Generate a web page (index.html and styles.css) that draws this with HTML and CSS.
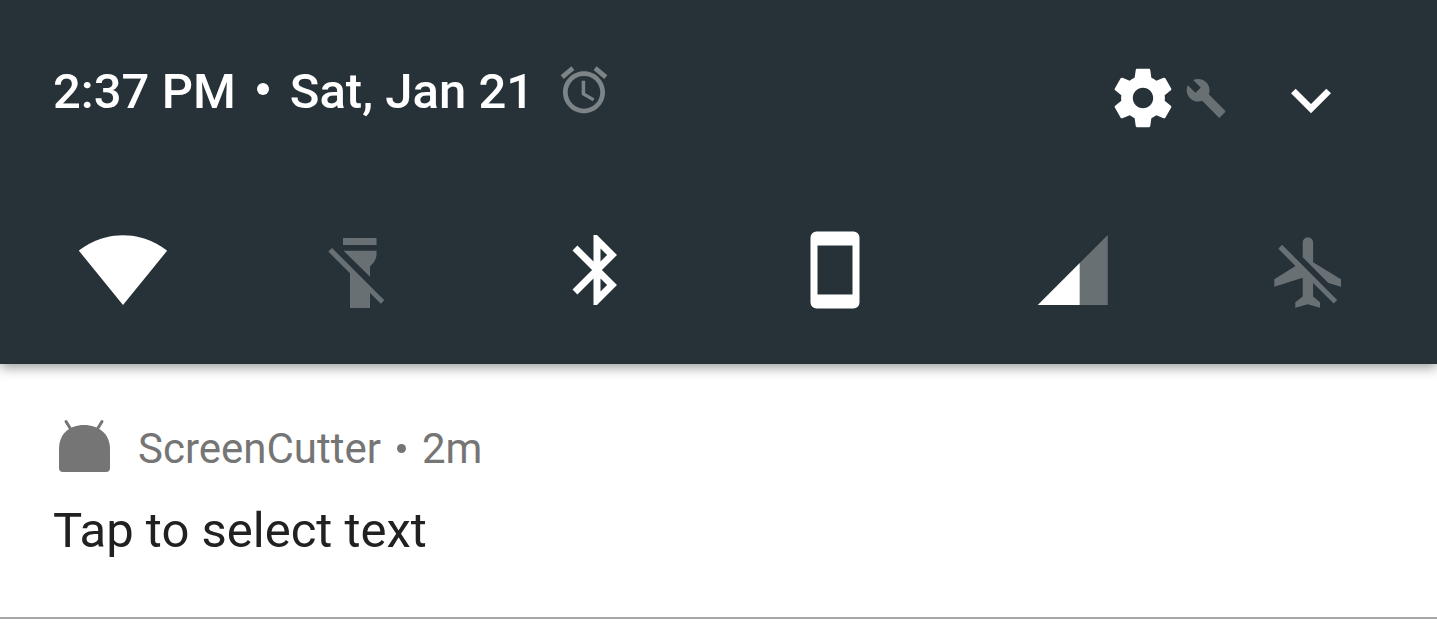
FILE: index.html
```html
<!DOCTYPE html>
<html lang="en">
<head>
<meta charset="utf-8">
<meta name="viewport" content="width=device-width, initial-scale=1">
<title>Notifications</title>
<link rel="stylesheet" href="styles.css">
</head>
<body>
<header class="quick-settings">
  <div class="status">
    <div class="clock">
      <span>2:37 PM</span><span class="dot"></span><span>Sat, Jan 21</span>
      <svg class="alarm" viewBox="0 0 24 24" role="img" aria-label="Alarm set"><path d="M22 5.72l-4.6-3.86-1.29 1.53 4.6 3.86L22 5.72zM7.88 3.39L6.6 1.86 2 5.71l1.29 1.53 4.59-3.85zM12.5 8H11v6l4.75 2.85.75-1.23-4-2.37V8zM12 4c-4.97 0-9 4.03-9 9s4.02 9 9 9c4.97 0 9-4.03 9-9s-4.03-9-9-9zm0 16c-3.87 0-7-3.13-7-7s3.13-7 7-7 7 3.13 7 7-3.13 7-7 7z"/></svg>
    </div>
    <div class="actions">
      <button class="icon-button" aria-label="Settings">
        <svg class="gear" viewBox="0 0 24 24"><path d="M19.43 12.98c.04-.32.07-.64.07-.98s-.03-.66-.07-.98l2.11-1.65c.19-.15.24-.42.12-.64l-2-3.46c-.12-.22-.39-.3-.61-.22l-2.49 1c-.52-.4-1.08-.73-1.69-.98l-.38-2.65C14.46 2.18 14.25 2 14 2h-4c-.25 0-.46.18-.49.42l-.38 2.65c-.61.25-1.17.59-1.69.98l-2.49-1c-.23-.09-.49 0-.61.22l-2 3.46c-.13.22-.07.49.12.64l2.11 1.65c-.04.32-.07.65-.07.98s.03.66.07.98l-2.11 1.65c-.19.15-.24.42-.12.64l2 3.46c.12.22.39.3.61.22l2.49-1c.52.4 1.08.73 1.69.98l.38 2.65c.03.24.24.42.49.42h4c.25 0 .46-.18.49-.42l.38-2.65c.61-.25 1.17-.59 1.69-.98l2.49 1c.23.09.49 0 .61-.22l2-3.46c.12-.22.07-.49-.12-.64l-2.11-1.65zM12 15.5c-1.93 0-3.5-1.57-3.5-3.5s1.57-3.5 3.5-3.5 3.5 1.57 3.5 3.5-1.57 3.5-3.5 3.5z"/></svg>
        <svg class="wrench off" viewBox="0 0 24 24"><path d="M22.7 19l-9.1-9.1c.9-2.3.4-5-1.5-6.9-2-2-5-2.4-7.4-1.3L9 6 6 9 1.6 4.7C.4 7.1.9 10.1 2.9 12.1c1.9 1.9 4.6 2.4 6.9 1.5l9.8 9.8 3.4-3.4c.1-.4 0-.7-.3-1z"/></svg>
      </button>
      <button class="icon-button" aria-label="Expand">
        <svg class="chevron" viewBox="0 0 24 24"><path d="M16.59 8.59L12 13.17 7.41 8.59 6 10l6 6 6-6z"/></svg>
      </button>
    </div>
  </div>
  <div class="tiles">
    <button class="tile" aria-label="Wi-Fi"><svg viewBox="1 0 24 24"><path d="M13 22L25.6 6.5C25.1 6.1 20.3 2.1 13 2.1S.9 6.1 .4 6.5z"/></svg></button>
    <button class="tile off" aria-label="Flashlight"><svg viewBox="0 0 84 84"><path d="M25 10h33.500v7H25zM25.500 22.700h33C59 30 57 34 52 38.300V48.700zM14 20L66.300 72.300 62.900 75.700 52 65V80H32V45.300L10.300 23.600z"/></svg></button>
    <button class="tile" aria-label="Bluetooth"><svg viewBox="0 0 24 24"><path d="M17.71 7.71L12 2h-1v7.59L6.41 5 5 6.41 10.59 12 5 17.59 6.41 19 11 14.41V22h1l5.71-5.71-4.3-4.29 4.3-4.29zM13 5.83l1.88 1.88L13 9.59V5.83zm1.88 10.46L13 18.17v-3.76l1.88 1.88z"/></svg></button>
    <button class="tile" aria-label="Portrait"><svg viewBox="0 0 84 84"><path fill-rule="evenodd" d="M24.500 3.500h37a6 6 0 0 1 6 6v65a6 6 0 0 1-6 6h-37a6 6 0 0 1-6-6v-65a6 6 0 0 1 6-6zM25.500 17.500v49h35v-49z"/></svg></button>
    <button class="tile" aria-label="Mobile data"><svg viewBox="-.5 0 24 24"><path class="faint" d="M14 10l8-8v20h-8z"/><path d="M2 22h12V10z"/></svg></button>
    <button class="tile off" aria-label="Airplane mode"><svg viewBox="0 0 84 84"><path d="M36.700 29.300V14.500a5.200 5.200 0 0 1 10.400 0V34.300L75 51.300V58.700L62.300 54.900zM16 16.700L71.200 72 67.700 75.600 47.100 55V68.500L54 74.300V79.700L41.800 76.300 29.300 79.700V74.300L36.700 68.500V49.700L8.300 58.700V51.300L29.500 38 12.300 20.700z"/></svg></button>
  </div>
</header>
<main class="notification">
  <div class="app">
    <svg class="app-icon" viewBox="0 0 52 54" aria-hidden="true"><path class="antenna" d="M8 2.500L12 9M44 2.500L40 9"/><path d="M1 30C1 15 11 6 26 6s26 9 26 24v19q0 4-4 4H5q-4 0-4-4z"/></svg>
    <span>ScreenCutter</span><span class="dot"></span><span>2m</span>
  </div>
  <p class="message">Tap to select text</p>
</main>
</body>
</html>
```
FILE: styles.css
```css
* {
  box-sizing: border-box;
}

body {
  margin: 0;
  background: #fff;
  font-family: Roboto, sans-serif;
}

svg {
  display: block;
  flex: none;
  fill: currentColor;
  overflow: visible;
}

button {
  padding: 0;
  border: 0;
  background: none;
  color: inherit;
  cursor: pointer;
}

.quick-settings {
  position: relative;
  padding: 56px 86px 52px 53px;
  background: #263238;
  color: #fff;
  box-shadow: 0 3px 12px rgba(0, 0, 0, .42);
}

.status,
.clock,
.actions,
.icon-button,
.app {
  display: flex;
  align-items: center;
}

.status {
  justify-content: space-between;
  align-items: flex-start;
}

.clock {
  height: 70px;
  font-size: 49px;
  font-weight: 500;
  white-space: nowrap;
}

.dot {
  width: 12px;
  height: 12px;
  margin: 0 21px 5px;
  border-radius: 50%;
  background: currentColor;
}

.alarm {
  width: 56px;
  height: 56px;
  margin: 0 0 2px 22px;
  color: #7d8488;
}

.actions {
  align-items: flex-start;
  gap: 44px;
  padding-top: 4px;
}

.icon-button {
  gap: 7px;
}

.gear {
  width: 70px;
  height: 76px;
}

.wrench {
  width: 42px;
  height: 42px;
}

.chevron {
  width: 80px;
  height: 80px;
}

.off {
  color: #687074;
}

.faint {
  fill: #687074;
}

.tiles {
  display: flex;
  justify-content: space-between;
  margin: 88px 1px 0 28px;
}

.tile svg {
  width: 84px;
  height: 84px;
}

.notification {
  padding: 55px 53px 56px;
  border-bottom: 2px solid #a6a6a6;
}

.app {
  color: #757575;
  font-size: 42px;
  line-height: 60px;
}

.app .dot {
  width: 9px;
  height: 9px;
  margin: 0 16px 2px;
}

.app-icon {
  width: 52px;
  height: 54px;
  margin: 0 28px 6px 5px;
}

.antenna {
  fill: none;
  stroke: currentColor;
  stroke-width: 3;
  stroke-linecap: round;
}

.message {
  margin: 22px 0 0;
  color: #212121;
  font-size: 49px;
  line-height: 60px;
}
```
